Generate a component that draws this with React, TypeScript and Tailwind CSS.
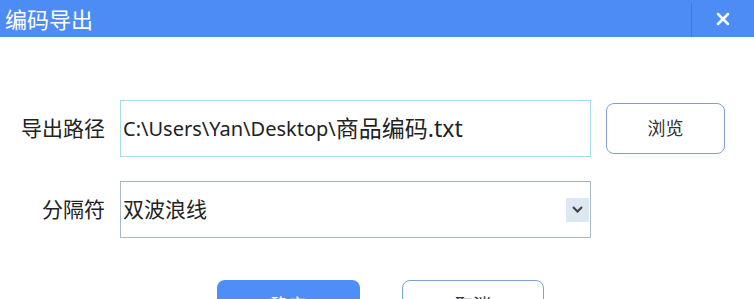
import React from 'react';

const font = { fontFamily: '"Noto Sans", "Noto Sans CJK SC", sans-serif' };

export default function App() {
  return (
    <div className="w-[754px] h-[299px] overflow-hidden bg-white text-[#222]" style={font}>
      {/* Title bar */}
      <div className="h-[37px] bg-[#4d8cf5] flex items-stretch">
        <div className="flex-1 flex items-center pl-[5px] text-white text-[22px] leading-none">编码导出</div>
        <div className="w-px bg-[#3f7ae0] mt-[3px]" />
        <div className="w-[62px] flex items-center justify-center">
          <svg width="14" height="14" viewBox="0 0 14 14">
            <path d="M2 2 L12 12 M12 2 L2 12" stroke="white" strokeWidth="2.5" strokeLinecap="round" />
          </svg>
        </div>
      </div>

      {/* Body */}
      <div className="pt-[63px] flex flex-col">
        <div className="flex items-center">
          <div className="w-[105px] text-right text-[21px]">导出路径</div>
          <div className="ml-[15px] w-[471px] h-[57px] border border-[#a3dde9] flex items-center pl-[2px] text-[20px] whitespace-nowrap">
            C:\Users\Yan\Desktop\<span className="text-[23px]">商品编码.txt</span>
          </div>
          <button className="ml-[15px] w-[119px] h-[51px] rounded-[8px] border border-[#7f9fd4] bg-white text-[18px] text-[#333]">
            浏览
          </button>
        </div>

        <div className="flex items-center mt-[24px]">
          <div className="w-[105px] text-right text-[21px]">分隔符</div>
          <div className="ml-[15px] w-[471px] h-[57px] border border-[#aab9c8] border-t-[#9fb0c2] flex items-center pl-[2px] pr-[1px] text-[21px]">
            <span className="flex-1">双波浪线</span>
            <div className="w-[23px] h-[24px] bg-[#dde7f2] flex items-center justify-center">
              <svg width="11" height="7" viewBox="0 0 11 7">
                <path d="M1 1 L5.5 5.5 L10 1" stroke="#444" strokeWidth="2.2" fill="none" />
              </svg>
            </div>
          </div>
        </div>

        <div className="flex mt-[42px] pl-[217px] gap-[42px]">
          <button className="w-[143px] h-[50px] rounded-[8px] bg-[#4e8ef6] text-white text-[18px]">确定</button>
          <button className="w-[142px] h-[50px] rounded-[8px] border border-[#7aa3e0] bg-white text-[18px] text-[#333]">取消</button>
        </div>
      </div>
    </div>
  );
}
